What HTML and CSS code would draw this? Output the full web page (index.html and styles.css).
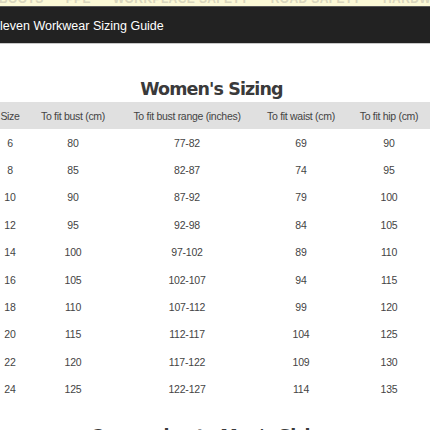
FILE: index.html
```html
<!DOCTYPE html>
<html>
<head>
<meta charset="utf-8">
<link rel="stylesheet" href="styles.css">
</head>
<body>
<div class="topnav">
  <div class="topnav-inner">
    <span>BOOTS</span><span>PPE</span><span>WORKPLACE SAFETY</span><span>ROAD SAFETY</span><span>HARDWARE</span><span>HI-VIS</span>
  </div>
</div>
<header class="titlebar">
  <h1 class="title">Eleven Workwear Sizing Guide</h1>
</header>
<main class="content">
  <h2 class="section-title">Women's Sizing</h2>
  <table class="size-table">
    <colgroup>
      <col class="c1"><col class="c2"><col class="c3"><col class="c4"><col class="c5">
    </colgroup>
    <thead>
      <tr><th>Size</th><th>To fit bust (cm)</th><th>To fit bust range (inches)</th><th>To fit waist (cm)</th><th>To fit hip (cm)</th></tr>
    </thead>
    <tbody>
      <tr><td>6</td><td>80</td><td>77-82</td><td>69</td><td>90</td></tr>
      <tr><td>8</td><td>85</td><td>82-87</td><td>74</td><td>95</td></tr>
      <tr><td>10</td><td>90</td><td>87-92</td><td>79</td><td>100</td></tr>
      <tr><td>12</td><td>95</td><td>92-98</td><td>84</td><td>105</td></tr>
      <tr><td>14</td><td>100</td><td>97-102</td><td>89</td><td>110</td></tr>
      <tr><td>16</td><td>105</td><td>102-107</td><td>94</td><td>115</td></tr>
      <tr><td>18</td><td>110</td><td>107-112</td><td>99</td><td>120</td></tr>
      <tr><td>20</td><td>115</td><td>112-117</td><td>104</td><td>125</td></tr>
      <tr><td>22</td><td>120</td><td>117-122</td><td>109</td><td>130</td></tr>
      <tr><td>24</td><td>125</td><td>122-127</td><td>114</td><td>135</td></tr>
    </tbody>
  </table>
  <h2 class="section-title second">Conversion to Men's Sizing</h2>
</main>
</body>
</html>
```

FILE: styles.css
```css
html, body {
  margin: 0;
  padding: 0;
  background: #ffffff;
  overflow: hidden;
}

body {
  width: 430px;
  height: 430px;
  font-family: "Liberation Sans", Arial, sans-serif;
}

.topnav {
  height: 6px;
  background: #fcf9d6;
  border-bottom: 1px solid #555555;
  overflow: hidden;
  display: flex;
  flex-direction: column;
  justify-content: flex-end;
}

.topnav-inner {
  flex: none;
  display: flex;
  gap: 22px;
  margin-left: -1px;
  height: 12px;
}

.topnav-inner span {
  flex: none;
  font-size: 12px;
  font-weight: bold;
  color: #d9d6bd;
  line-height: 10px;
  white-space: nowrap;
  letter-spacing: 0.4px;
}

.titlebar {
  height: 36px;
  background: #222222;
  border-bottom: 1px solid #c8c8c8;
  display: flex;
  align-items: center;
  overflow: hidden;
}

.title {
  margin: 2px 0 0 -8.3px;
  font-size: 12.5px;
  font-weight: normal;
  color: #ffffff;
  white-space: nowrap;
}

.content {
  padding-top: 32px;
}

.section-title {
  margin: 0;
  text-align: center;
  font-family: "DejaVu Sans", sans-serif;
  font-size: 17.5px;
  font-weight: bold;
  color: #3a3a3a;
  line-height: 26px;
  padding-right: 7px;
  letter-spacing: -0.9px;
}

.section-title.second {
  margin-top: 20px;
}

.size-table {
  border-collapse: collapse;
  table-layout: fixed;
  width: 452px;
  margin-left: -14px;
  color: #444;
  font-size: 10.5px;
}

.c1 { width: 48px; }
.c2 { width: 78px; }
.c3 { width: 150px; }
.c4 { width: 78px; }
.c5 { width: 98px; }

.size-table th {
  background: #e0e0e0;
  font-weight: normal;
  height: 27px;
  padding: 0;
  text-align: center;
  letter-spacing: -0.3px;
  white-space: nowrap;
}

.size-table td {
  height: 27.4px;
  padding: 0;
  text-align: center;
  letter-spacing: -0.2px;
}
```
